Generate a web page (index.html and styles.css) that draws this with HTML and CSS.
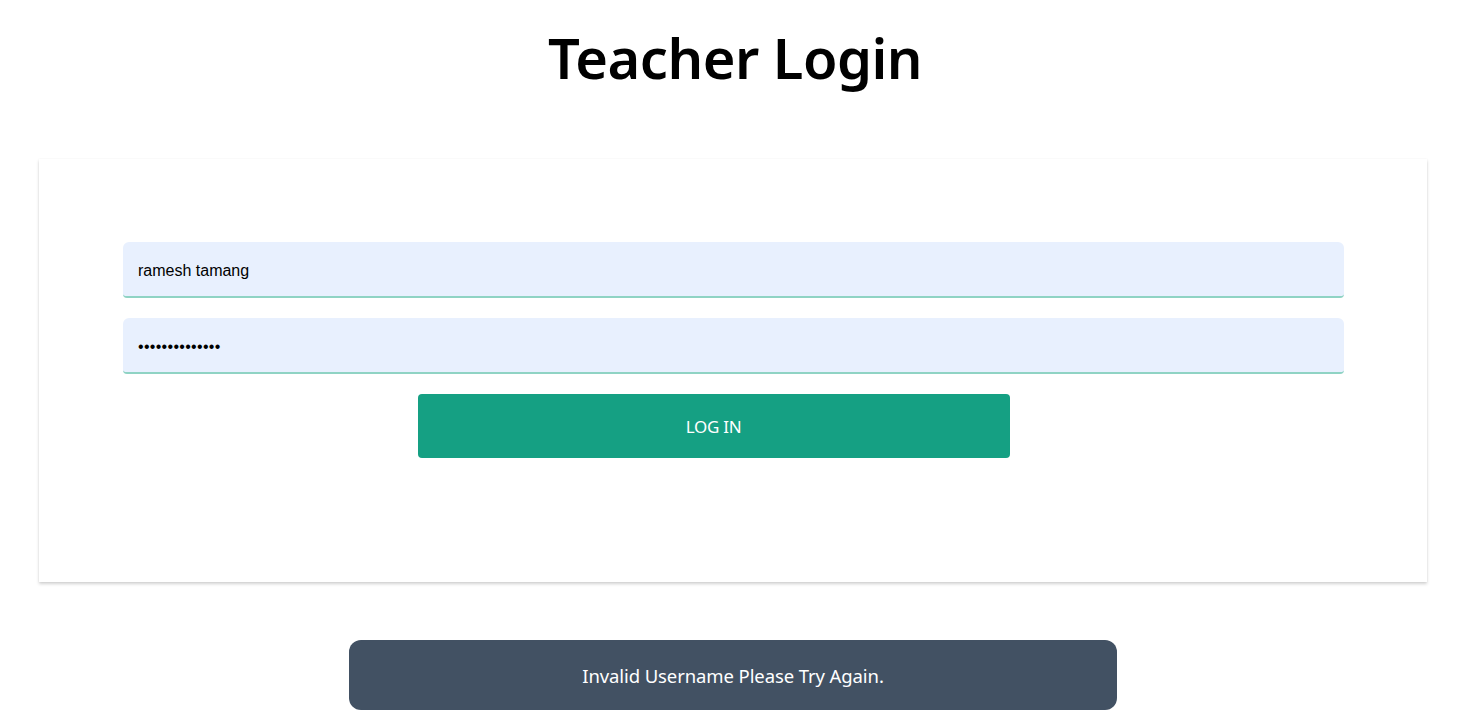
FILE: index.html
```html
<!DOCTYPE html>
<html lang="en">
<head>
<meta charset="utf-8">
<title>Teacher Login</title>
<link rel="stylesheet" href="styles.css">
</head>
<body>
<main class="page">
  <h1 class="title">Teacher Login</h1>
  <form class="card">
    <input class="field" type="text" value="ramesh tamang">
    <input class="field pass" type="password" value="ramesh12345678">
    <button class="btn" type="button">LOG IN</button>
  </form>
  <div class="toast">Invalid Username Please Try Again.</div>
</main>
</body>
</html>
```
FILE: styles.css
```css
* { box-sizing: border-box; }
html, body { margin: 0; padding: 0; background: #fff; }
body { font-family: "Noto Sans", "Open Sans", sans-serif; color: #000; }
.page {
  display: flex;
  flex-direction: column;
  align-items: center;
  padding-top: 22px;
}
.title {
  margin: 0;
  font-size: 56px;
  font-weight: 600;
  line-height: 70px;
  letter-spacing: -0.5px;
}
.card {
  margin-top: 67px;
  width: 1388px;
  margin-left: -4px;
  height: 423px;
  background: #fff;
  box-shadow: 0 2px 3px rgba(0,0,0,0.18), 0 0 2px rgba(0,0,0,0.04);
  padding: 83px 83px 0 84px;
  display: flex;
  flex-direction: column;
  align-items: center;
  gap: 20px;
}
.field {
  width: 100%;
  height: 56px;
  flex: none;
  border: none;
  border-bottom: 2px solid #8fd3c4;
  border-radius: 6px 6px 4px 4px;
  background: #e8f0fe;
  padding: 3px 15px 0;
  font-family: "Liberation Sans", Arial, sans-serif;
  font-size: 16px;
  color: #000;
  outline: none;
}
.pass { letter-spacing: 0.3px; }
.btn {
  width: 592px;
  height: 64px;
  flex: none;
  margin-right: 40px;
  border: none;
  border-radius: 4px;
  background: #15a083;
  color: #fff;
  font-family: "Noto Sans", "Open Sans", sans-serif;
  font-size: 17px;
  letter-spacing: -0.3px;
  cursor: pointer;
}
.toast {
  margin-top: 58px;
  width: 768px;
  height: 70px;
  margin-left: -4px;
  border-radius: 12px;
  background: #425163;
  color: #fff;
  display: flex;
  align-items: center;
  justify-content: center;
  font-size: 18.5px;
  letter-spacing: -0.1px;
}
```
